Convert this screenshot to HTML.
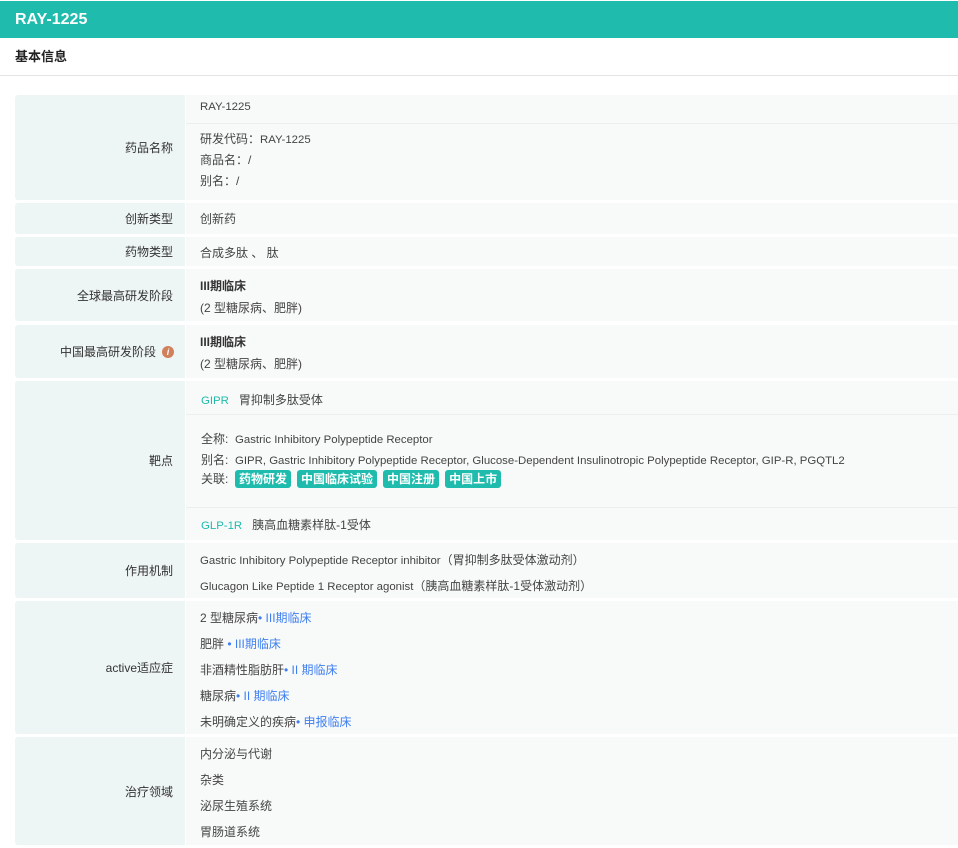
<!DOCTYPE html>
<html><head><meta charset="utf-8"><style>
*{margin:0;padding:0;box-sizing:border-box}
body{width:958px;height:848px;background:#fff;font-family:"Liberation Sans","Noto Sans CJK SC",sans-serif;font-size:12px;color:#444;position:relative;overflow:hidden}
.hd{position:absolute;left:0;top:1px;width:958px;height:37px;background:#1fbbad;color:#fff;font-weight:bold;font-size:16px;line-height:37px;padding-left:15px}
.st{position:absolute;left:0;top:38px;width:958px;height:38px;border-bottom:1px solid #e4e4e4;font-weight:bold;font-size:13px;line-height:38px;padding-left:15px;color:#222}
.l{position:absolute;left:15px;width:170px;background:#eef5f5;text-align:right;padding-right:12px;color:#333;display:flex;align-items:center;justify-content:flex-end;border-radius:3px 0 0 3px}
.v{position:absolute;left:186px;width:772px;background:#f8fafa;padding-left:14px}
.t{position:absolute;white-space:nowrap}
.n{font-size:11.4px}
.tl{color:#1fbbad}
.b{color:#3f7ff0}
.tag{display:inline-block;background:#1fbbad;color:#fff;font-weight:bold;border-radius:3px;padding:0 4px;height:18px;line-height:18px;margin-right:6px;font-size:12px}
.sep{position:absolute;left:186px;width:772px;height:1px;background:#eceff0}
</style></head><body>
<div class="hd">RAY-1225</div>
<div class="st">基本信息</div>

<div class="l" style="top:95px;height:105px">药品名称</div>
<div class="v" style="top:95px;height:105px"></div>
<div class="sep" style="top:123px"></div>
<div class="t n" style="left:200px;top:101px">RAY-1225</div>
<div class="t" style="left:200px;top:130px">研发代码：<span class="n">RAY-1225</span></div>
<div class="t" style="left:200px;top:151px">商品名：/</div>
<div class="t" style="left:200px;top:172px">别名：/</div>

<div class="l" style="top:203px;height:31px">创新类型</div>
<div class="v" style="top:203px;height:31px"></div>
<div class="t" style="left:200px;top:210px">创新药</div>

<div class="l" style="top:237px;height:29px">药物类型</div>
<div class="v" style="top:237px;height:29px"></div>
<div class="t" style="left:200px;top:244px">合成多肽 、 肽</div>

<div class="l" style="top:269px;height:52px">全球最高研发阶段</div>
<div class="v" style="top:269px;height:52px"></div>
<div class="t" style="left:200px;top:277px;font-weight:bold;color:#333">III期临床</div>
<div class="t" style="left:200px;top:299px">(2 型糖尿病、肥胖)</div>

<div class="l" style="top:325px;height:53px">中国最高研发阶段<span style="display:inline-block;width:12px;height:12px;border-radius:50%;background:#d0805a;color:#fff;font-size:9px;line-height:12px;text-align:center;font-style:italic;font-weight:bold;margin-left:6px;margin-right:-1px">i</span></div>
<div class="v" style="top:325px;height:53px"></div>
<div class="t" style="left:200px;top:333px;font-weight:bold;color:#333">III期临床</div>
<div class="t" style="left:200px;top:355px">(2 型糖尿病、肥胖)</div>

<div class="l" style="top:381px;height:159px">靶点</div>
<div class="v" style="top:381px;height:159px"></div>
<div class="sep" style="top:414px"></div>
<div class="sep" style="top:507px"></div>
<div class="t" style="left:201px;top:391px"><span class="tl n">GIPR</span>&nbsp;&nbsp; 胃抑制多肽受体</div>
<div class="t" style="left:201px;top:430px">全称:&nbsp; <span class="n">Gastric Inhibitory Polypeptide Receptor</span></div>
<div class="t" style="left:201px;top:451px">别名:&nbsp; <span class="n">GIPR, Gastric Inhibitory Polypeptide Receptor, Glucose-Dependent Insulinotropic Polypeptide Receptor, GIP-R, PGQTL2</span></div>
<div class="t" style="left:201px;top:470px">关联:&nbsp; <span class="tag">药物研发</span><span class="tag">中国临床试验</span><span class="tag">中国注册</span><span class="tag">中国上市</span></div>
<div class="t" style="left:201px;top:516px"><span class="tl n">GLP-1R</span>&nbsp;&nbsp; 胰高血糖素样肽-1受体</div>

<div class="l" style="top:543px;height:55px">作用机制</div>
<div class="v" style="top:543px;height:55px"></div>
<div class="t" style="left:200px;top:551px"><span class="n">Gastric Inhibitory Polypeptide Receptor inhibitor</span>（胃抑制多肽受体激动剂）</div>
<div class="t" style="left:200px;top:577px"><span class="n">Glucagon Like Peptide 1 Receptor agonist</span>（胰高血糖素样肽-1受体激动剂）</div>

<div class="l" style="top:601px;height:133px">active适应症</div>
<div class="v" style="top:601px;height:133px"></div>
<div class="t" style="left:200px;top:609px">2 型糖尿病<span class="b">• III期临床</span></div>
<div class="t" style="left:200px;top:635px">肥胖<span class="b"> • III期临床</span></div>
<div class="t" style="left:200px;top:661px">非酒精性脂肪肝<span class="b">• II 期临床</span></div>
<div class="t" style="left:200px;top:687px">糖尿病<span class="b">• II 期临床</span></div>
<div class="t" style="left:200px;top:713px">未明确定义的疾病<span class="b">• 申报临床</span></div>

<div class="l" style="top:737px;height:108px">治疗领域</div>
<div class="v" style="top:737px;height:108px"></div>
<div class="t" style="left:200px;top:745px">内分泌与代谢</div>
<div class="t" style="left:200px;top:771px">杂类</div>
<div class="t" style="left:200px;top:797px">泌尿生殖系统</div>
<div class="t" style="left:200px;top:823px">胃肠道系统</div>
</body></html>
